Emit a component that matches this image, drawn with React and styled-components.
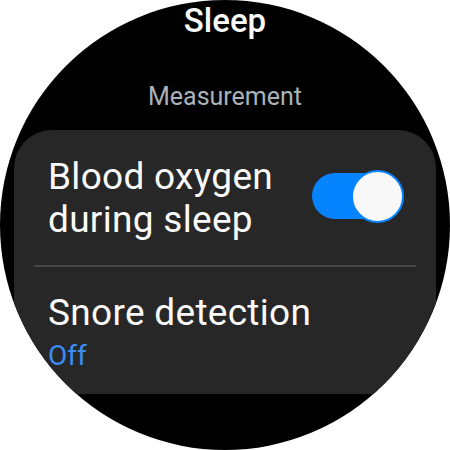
import React from "react";
import styled, { createGlobalStyle } from "styled-components";

const GlobalStyle = createGlobalStyle`
  html, body { margin: 0; padding: 0; background: #ffffff; }
  body { font-family: Roboto, "Noto Sans", "Liberation Sans", sans-serif; }
  * { box-sizing: border-box; }
`;

const Watch = styled.div`
  width: 450px;
  height: 450px;
  border-radius: 50%;
  background: #000;
  overflow: hidden;
  display: flex;
  flex-direction: column;
  align-items: center;
`;

const Title = styled.div`
  margin-top: 1px;
  font-size: 33px;
  line-height: 40px;
  font-weight: 500;
  color: #fafafa;
`;

const Subheader = styled.div`
  margin-top: 41px;
  font-size: 25px;
  line-height: 30px;
  color: #aab2ba;
`;

const Card = styled.div`
  margin-top: 18px;
  width: 422px;
  height: 264px;
  background: #272727;
  border-radius: 38px 38px 0 0;
  display: flex;
  flex-direction: column;
`;

const Row = styled.div`
  display: flex;
  align-items: center;
  gap: 10px;
  padding: ${(p) => p.$pad};
`;

const TextBlock = styled.div`
  flex: 1;
  display: flex;
  flex-direction: column;
`;

const Label = styled.div`
  font-size: 37px;
  line-height: 43px;
  letter-spacing: 0.3px;
  color: #fafafa;
`;

const Status = styled.div`
  margin-top: 5px;
  font-size: 28px;
  line-height: 34px;
  color: #3b8cf2;
`;

const Divider = styled.div`
  height: 2px;
  margin: 0 20px;
  background: #454545;
`;

const Switch = styled.div`
  position: relative;
  flex: none;
  width: 92px;
  height: 53px;
  margin-bottom: 4px;
`;

const Track = styled.div`
  position: absolute;
  left: 0;
  right: 4px;
  top: 3px;
  bottom: 4px;
  border-radius: 23px;
  background: ${(p) => (p.$on ? "#0683fe" : "#555")};
`;

const Thumb = styled.div`
  position: absolute;
  top: 0;
  ${(p) => (p.$on ? "right: 0;" : "left: 0;")}
  width: 53px;
  height: 53px;
  border-radius: 50%;
  background: #f8f8f8;
  border: 2px solid #0683fe;
`;

export default function App() {
  return (
    <>
      <GlobalStyle />
      <Watch>
        <Title>Sleep</Title>
        <Subheader>Measurement</Subheader>
        <Card>
          <Row $pad="25px 32px 24px 34px">
            <TextBlock>
              <Label>Blood oxygen during sleep</Label>
            </TextBlock>
            <Switch>
              <Track $on />
              <Thumb $on />
            </Switch>
          </Row>
          <Divider />
          <Row $pad="24px 32px 0 34px">
            <TextBlock>
              <Label>Snore detection</Label>
              <Status>Off</Status>
            </TextBlock>
          </Row>
        </Card>
      </Watch>
    </>
  );
}
